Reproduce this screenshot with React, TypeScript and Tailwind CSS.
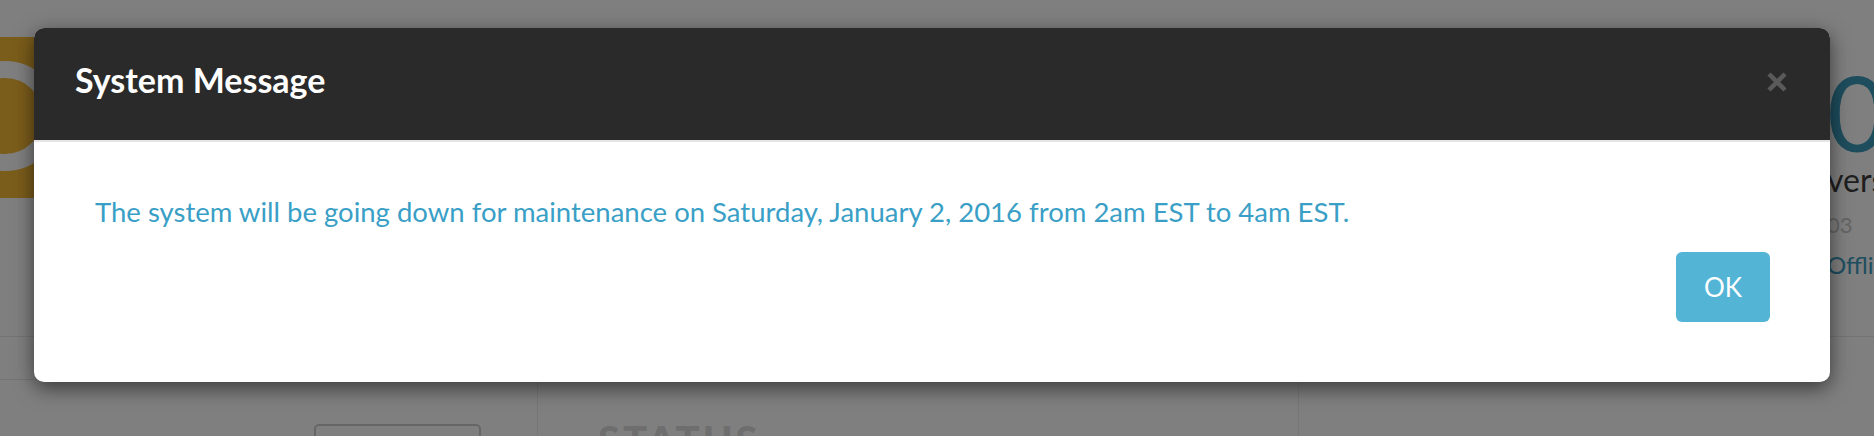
// システムメッセージのモーダル(背景のダッシュボードは暗くなっている)

const SystemMessageModal = ({ message }: { message: string }) => {
  return (
    <div className="absolute left-[34px] top-[28px] w-[1796px] overflow-hidden rounded-[10px] bg-white shadow-[0_6px_20px_rgba(0,0,0,0.55)]">
      <div className="flex h-[114px] items-start justify-between border-b-2 border-[#e5e5e5] bg-[#2a2a2a] pl-[41px] pr-[42px]">
        <h4 className="mt-[32px] text-[34px] font-bold leading-[40px] text-white">System Message</h4>
        <button type="button" className="mt-[43px] h-[22px] w-[22px]">
          <svg viewBox="0 0 22 22" className="h-[22px] w-[22px]">
            <path d="M3 3 L19 19 M19 3 L3 19" stroke="#5a5a5a" strokeWidth="4.5" strokeLinecap="butt" />
          </svg>
        </button>
      </div>
      <div className="pl-[61px] pr-[60px] pt-[53px] pb-[60px]">
        <p className="text-[27.5px] leading-[33px] text-[#3a9fc6]">{message}</p>
        <div className="mt-[24px] flex justify-end">
          <button
            type="button"
            className="h-[70px] w-[94px] rounded-[6px] bg-[#53b4d6] text-[26px] text-white"
          >
            OK
          </button>
        </div>
      </div>
    </div>
  );
};

export default function App() {
  return (
    <div className="relative h-[436px] w-[1874px] overflow-hidden bg-white font-['Lato',sans-serif]">
      {/* 背景のページ */}
      <div className="flex flex-col">
        <div className="flex h-[337px] justify-between border-b border-[#e8e8e8]">
          <div className="mt-[37px] h-[161px] w-[330px] bg-[#f6bb37]">
            <svg width="120" height="161" viewBox="0 0 120 161">
              <circle cx="5" cy="79" r="46.5" fill="none" stroke="#ffffff" strokeWidth="17" />
            </svg>
          </div>
          <div className="w-[47px] whitespace-nowrap pt-[62px]">
            <div className="text-[104px] leading-[100px] text-[#3c9aba]">0</div>
            <div className="text-[32px] leading-[36px] text-[#3c3c3c]">vers</div>
            <div className="mt-[9px] text-[22px] leading-[35px] text-[#c8c8c8]">03</div>
            <div className="mt-[7px] text-[24px] leading-[32px] text-[#3d9cc0]">Offline</div>
          </div>
        </div>
        <div className="flex h-[99px]">
          <div className="w-[538px] border-r border-[#ececec]">
            <div className="h-[43px] border-b border-[#e8e8e8]"></div>
            <div className="ml-[314px] mt-[44px] h-[40px] w-[167px] rounded-[5px] border-2 border-[#cccccc]"></div>
          </div>
          <div className="w-[761px] border-r border-[#ececec] pl-[60px] pt-[83px]">
            <div className="text-[40px] font-black leading-[40px] tracking-[3px] text-[#dcdcdc]">STATUS</div>
          </div>
          <div className="flex-1"></div>
        </div>
      </div>

      {/* バックドロップ */}
      <div className="absolute inset-0 bg-black/50"></div>

      <SystemMessageModal message="The system will be going down for maintenance on Saturday, January 2, 2016 from 2am EST to 4am EST." />
    </div>
  );
}
